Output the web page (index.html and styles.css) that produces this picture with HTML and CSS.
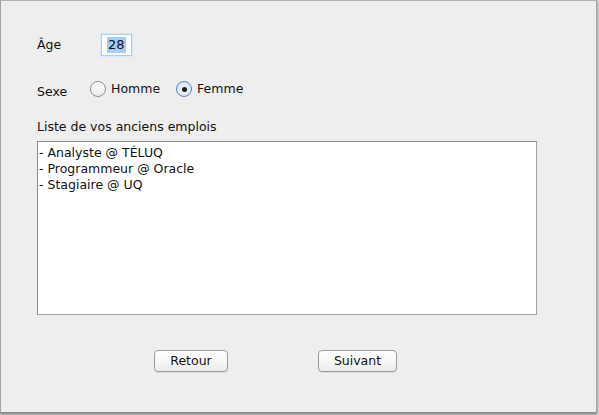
FILE: index.html
```html
<!DOCTYPE html>
<html lang="fr">
<head>
<meta charset="utf-8">
<title>Formulaire</title>
<link rel="stylesheet" href="styles.css">
</head>
<body>
<div class="window">
  <div class="form">
    <div class="row row-age">
      <span class="label label-age">Âge</span>
      <span class="field"><span class="selected">28</span></span>
    </div>
    <div class="row row-sexe">
      <span class="label label-sexe">Sexe</span>
      <label class="radio"><span class="radio-circle"></span><span class="radio-text">Homme</span></label>
      <label class="radio"><span class="radio-circle checked"><span class="dot"></span></span><span class="radio-text">Femme</span></label>
    </div>
    <div class="list-label">Liste de vos anciens emplois</div>
    <div class="list">
      <div class="item">- Analyste @ TÉLUQ</div>
      <div class="item">- Programmeur @ Oracle</div>
      <div class="item">- Stagiaire @ UQ</div>
    </div>
    <div class="buttons">
      <span class="button btn-back">Retour</span>
      <span class="button btn-next">Suivant</span>
    </div>
  </div>
</div>
</body>
</html>
```
FILE: styles.css
```css
html, body {
  margin: 0;
  padding: 0;
}
body {
  width: 599px;
  height: 415px;
  background: #d2d2d2;
  font-family: "DejaVu Sans", "Liberation Sans", sans-serif;
  font-size: 12.5px;
  color: #111;
  overflow: hidden;
}
.window {
  width: 595px;
  height: 411px;
  background: #eeeeee;
  border-top: 1px solid #b4b4b4;
  border-left: 1px solid #a4a4a4;
  border-right: 1px solid #a8a8a8;
  border-bottom: 1px solid #8a8a8a;
  box-shadow: 0 1px 2px rgba(0,0,0,0.45);
}
.form {
  padding: 33px 0 0 36px;
  display: flex;
  flex-direction: column;
}
.row {
  display: flex;
}
.row-age {
  align-items: baseline;
  height: 22px;
}
.label {
  line-height: 16px;
}
.label-age {
  width: 64px;
}
.field {
  display: inline-flex;
  align-items: center;
  box-sizing: border-box;
  width: 31px;
  height: 22px;
  padding: 0 0 0 5px;
  background: #fff;
  border: 1px solid #a9cdf3;
  box-shadow: 0 0 0 1px #d6e8fb;
  line-height: 18px;
  font-size: 13px;
}
.selected {
  background: #a7cbf7;
  padding: 0 1px;
  line-height: 16px;
}
.row-sexe {
  margin-top: 25px;
  align-items: flex-start;
  height: 18px;
}
.label-sexe {
  width: 53px;
  margin-top: 3px;
}
.radio {
  display: flex;
  align-items: center;
  height: 16px;
  margin-right: 16px;
}
.radio-circle {
  box-sizing: border-box;
  width: 16px;
  height: 16px;
  border-radius: 50%;
  border: 1px solid #8e8e8e;
  background: linear-gradient(#ffffff, #ececec);
  display: flex;
  align-items: center;
  justify-content: center;
  margin-right: 5px;
}
.radio-circle.checked {
  border-color: #5f83b8;
  background: radial-gradient(circle at 50% 60%, #f4f8fd 0%, #d7e5f6 70%, #b9cfee 100%);
}
.dot {
  width: 5px;
  height: 5px;
  border-radius: 50%;
  background: #1b1b1b;
}
.radio-text {
  line-height: 16px;
}
.list-label {
  margin-top: 20px;
  line-height: 16px;
}
.list {
  margin-top: 6px;
  box-sizing: border-box;
  width: 500px;
  height: 174px;
  background: #fff;
  border: 1px solid #8c8c8c;
  border-right-color: #a0a0a0;
  border-bottom-color: #a0a0a0;
  padding: 3px 0 0 1px;
}
.item {
  line-height: 16px;
}
.buttons {
  margin-top: 35px;
  display: flex;
  padding-left: 117px;
  gap: 90px;
}
.button {
  box-sizing: border-box;
  height: 22px;
  border: 1px solid #9b9b9b;
  border-radius: 4px;
  background: linear-gradient(#ffffff 0%, #f7f7f7 50%, #ececec 100%);
  box-shadow: 0 1px 0 rgba(0,0,0,0.08);
  display: flex;
  align-items: center;
  justify-content: center;
  line-height: 16px;
}
.btn-back {
  width: 74px;
}
.btn-next {
  width: 79px;
}
```
